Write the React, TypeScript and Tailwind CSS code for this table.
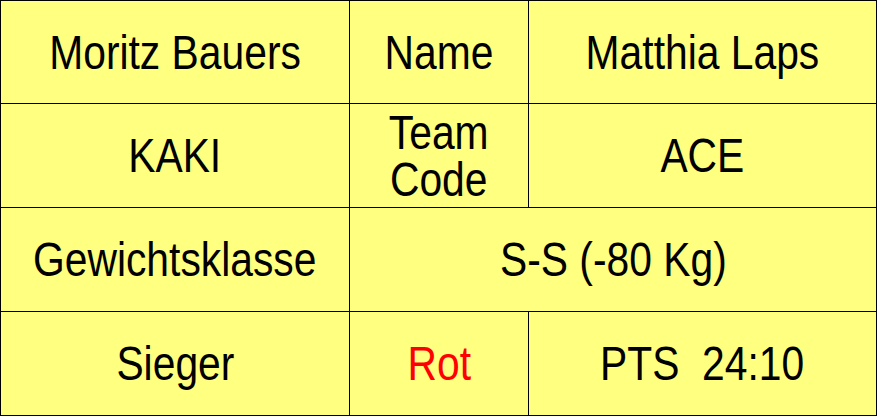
const cell = "flex items-center justify-center bg-[#ffff80] text-center";

function Label({ children, red = false }: { children: React.ReactNode; red?: boolean }) {
  return (
    <span
      className={`inline-block origin-center scale-x-[0.85] whitespace-pre text-[48px] leading-[47px] ${red ? "text-[#ff0000]" : "text-black"}`}
    >
      {children}
    </span>
  );
}

export default function App() {
  return (
    <div
      className="grid h-[416px] w-[877px] grid-cols-[348px_178px_347px] grid-rows-[102px_103px_103px_103px] gap-px bg-black p-px"
      style={{ fontFamily: '"Liberation Sans", Arial, sans-serif' }}
    >
      <div className={cell}><Label>Moritz Bauers</Label></div>
      <div className={cell}><Label>Name</Label></div>
      <div className={cell}><Label>Matthia Laps</Label></div>

      <div className={cell}><Label>KAKI</Label></div>
      <div className={cell}><Label>{"Team\nCode"}</Label></div>
      <div className={cell}><Label>ACE</Label></div>

      <div className={cell}><Label>Gewichtsklasse</Label></div>
      <div className={`${cell} col-span-2`}><Label>S-S (-80 Kg)</Label></div>

      <div className={cell}><Label>Sieger</Label></div>
      <div className={cell}><Label red>Rot</Label></div>
      <div className={cell}><Label>PTS  24:10</Label></div>
    </div>
  );
}
